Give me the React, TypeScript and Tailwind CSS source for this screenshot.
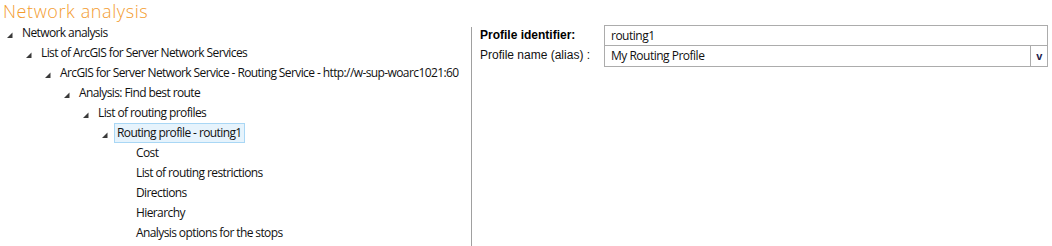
import React from "react";

type Node = { label: string; level: number; expanded?: boolean; selected?: boolean };

const nodes: Node[] = [
  { label: "Network analysis", level: 0, expanded: true },
  { label: "List of ArcGIS for Server Network Services", level: 1, expanded: true },
  { label: "ArcGIS for Server Network Service - Routing Service - http://w-sup-woarc1021:60", level: 2, expanded: true },
  { label: "Analysis: Find best route", level: 3, expanded: true },
  { label: "List of routing profiles", level: 4, expanded: true },
  { label: "Routing profile - routing1", level: 5, expanded: true, selected: true },
  { label: "Cost", level: 6 },
  { label: "List of routing restrictions", level: 6 },
  { label: "Directions", level: 6 },
  { label: "Hierarchy", level: 6 },
  { label: "Analysis options for the stops", level: 6 },
];

const indent = ["pl-[7px]", "pl-[26px]", "pl-[45px]", "pl-[64px]", "pl-[83px]", "pl-[102px]", "pl-[121px]"];

function Arrow() {
  return (
    <svg width="15" height="8" viewBox="0 0 15 8" className="mt-[3px] shrink-0">
      <path d="M5.5 1.5 L5.5 7 L0 7 Z" fill="#3a3a3a" />
    </svg>
  );
}

function TreeRow({ node }: { node: Node }) {
  return (
    <div className={`flex h-5 items-center whitespace-nowrap ${indent[node.level]}`}>
      {node.expanded ? <Arrow /> : <span className="w-[15px] shrink-0" />}
      <span
        className={
          node.selected
            ? "-ml-[3px] border border-[#a9d7f5] bg-[#e6f3fc] px-[2px] leading-[18px] text-[#111]"
            : "leading-5 text-[#111]"
        }
      >
        {node.label}
      </span>
    </div>
  );
}

export default function App() {
  return (
    <div className="h-[246px] w-[1052px] overflow-hidden bg-white font-['Open_Sans',sans-serif]">
      <div className="h-[23px] whitespace-nowrap pl-[3px] text-[18px] font-light leading-[22px] tracking-[0.6px] text-[#f39c2f]">
        Network analysis
      </div>
      <div className="flex">
        <div className="w-[471px] text-[12px] tracking-[-0.6px]">
          {nodes.map((n) => (
            <TreeRow key={n.label} node={n} />
          ))}
        </div>
        <div className="mt-[4px] h-[220px] w-px bg-[#a0a0a0]" />
        <div className="flex-1 pr-[4px] pt-[2px]">
          <div className="flex">
            <div className="w-[132px] whitespace-nowrap pl-[8px] font-['Liberation_Sans',sans-serif] text-[12px] leading-[20px]">
              <div className="h-5 font-bold text-black">Profile identifier:</div>
              <div className="h-5 text-[#111]">Profile name (alias) :</div>
            </div>
            <div className="flex-1 text-[12px] tracking-[-0.5px] text-[#111]">
              <div className="h-[21px] border border-[#acacac] pl-[6px] leading-[19px]">routing1</div>
              <div className="flex h-[21px] border border-t-0 border-[#acacac]">
                <div className="flex-1 pl-[6px] leading-[20px]">My Routing Profile</div>
                <div className="flex w-[17px] items-center justify-center border-l border-[#acacac] font-['Liberation_Sans',sans-serif] text-[11px] font-bold text-[#1a1a4a]">
                  v
                </div>
              </div>
            </div>
          </div>
        </div>
      </div>
    </div>
  );
}
